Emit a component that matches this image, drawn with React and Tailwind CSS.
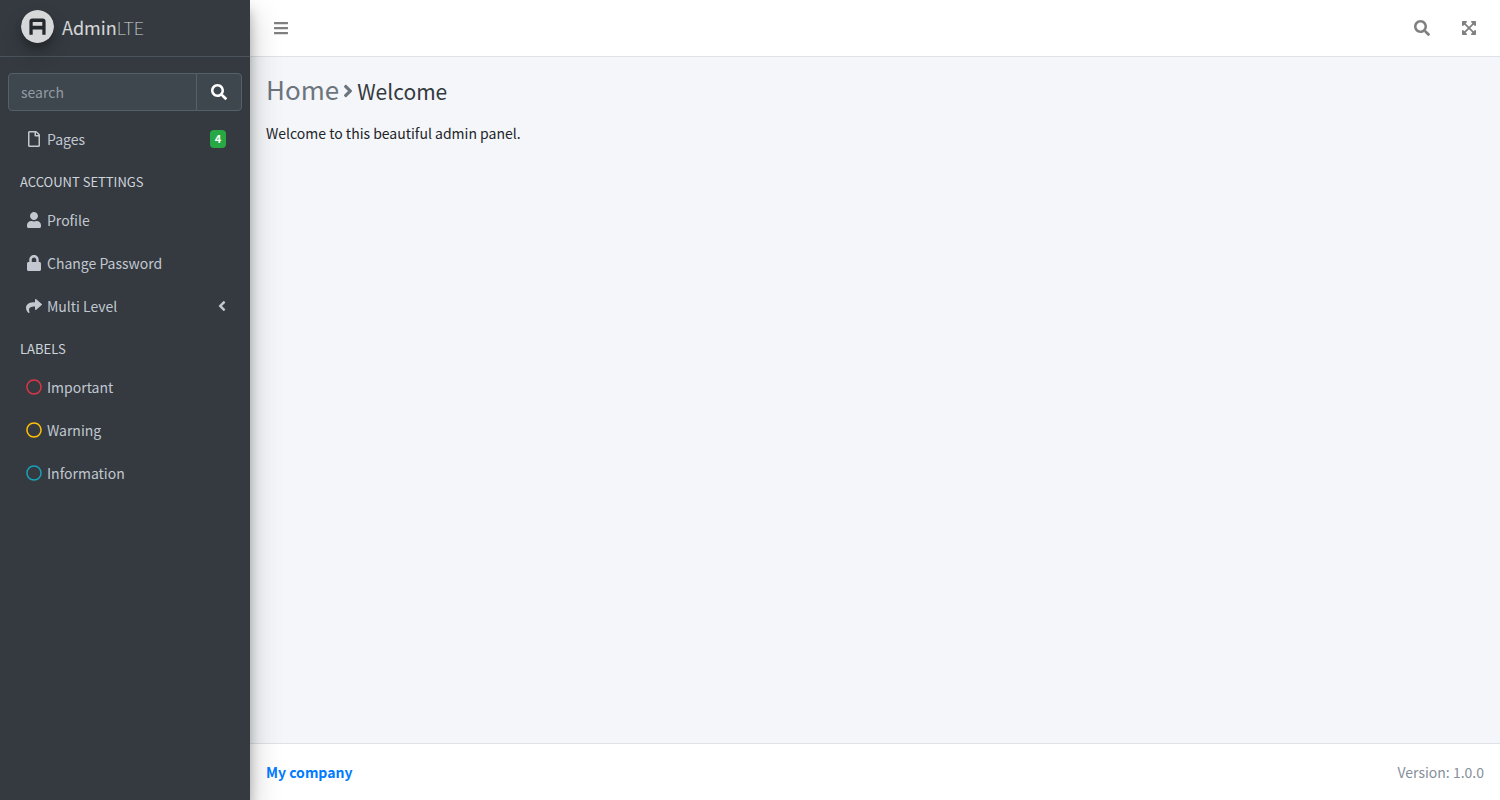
import { FaSearch, FaRegFile, FaUser, FaLock, FaShare, FaAngleLeft, FaAngleRight, FaRegCircle, FaBars, FaExpandArrowsAlt } from "react-icons/fa";

function Logo() {
  return (
    <svg viewBox="0 0 33 33" className="size-[33px] shrink-0 rounded-full opacity-80 shadow-[0_10px_20px_rgba(0,0,0,0.19),0_6px_6px_rgba(0,0,0,0.23)]" aria-hidden="true">
      <circle cx="16.5" cy="16.5" r="16.5" fill="#fff" />
      <path d="M8.4 24.8V11.6a3 3 0 0 1 3-3h10.2a3 3 0 0 1 3 3v13.2h-3.3v-5.2h-9.6v5.2zM11.7 12v3.8h9.6v-3.8z" fill="#212529" fillRule="evenodd" />
    </svg>
  );
}

function NavItem({ icon: Icon, iconClass = "", label, children }) {
  return (
    <li className="mb-[3px]">
      <a href="#" className="flex h-10 items-center rounded px-4 text-[#c2c7d0]">
        <span className="mr-[3px] flex w-5 justify-center">
          <Icon className={`size-4 ${iconClass}`} aria-hidden="true" />
        </span>
        <span className="flex-1">{label}</span>
        {children}
      </a>
    </li>
  );
}

function NavHeader({ children }) {
  return <li className="flex h-[38px] items-center px-3 pt-[2px] text-[13px] text-[#d0d4db]">{children}</li>;
}

function Sidebar() {
  return (
    <aside className="z-10 flex w-[250px] shrink-0 flex-col bg-[#343a40] shadow-[0_14px_28px_rgba(0,0,0,0.25),0_10px_10px_rgba(0,0,0,0.22)]">
      <a href="#" className="flex h-[57px] items-center gap-2 border-b border-[#4b545c] pb-[3px] pl-[21px] text-lg text-white/80">
        <Logo />
        <span>Admin<span className="font-thin">LTE</span></span>
      </a>
      <div className="px-2 pt-4">
        <form className="flex h-[38px] overflow-hidden rounded border border-[#56606a] bg-[#3f474e]" onSubmit={(e) => e.preventDefault()}>
          <input type="search" aria-label="search" placeholder="search" className="min-w-0 flex-1 px-3 text-white outline-none placeholder:text-[#939ba2]" />
          <button type="submit" aria-label="Submit search" className="flex w-[45px] items-center justify-center border-l border-[#56606a] text-white">
            <FaSearch className="size-4" />
          </button>
        </form>
        <nav className="mt-2">
          <ul>
            <NavItem icon={FaRegFile} label="Pages">
              <span className="flex h-[18px] w-4 items-center justify-center rounded bg-[#28a745] text-[11px] font-bold text-white">4</span>
            </NavItem>
            <NavHeader>ACCOUNT SETTINGS</NavHeader>
            <NavItem icon={FaUser} label="Profile" />
            <NavItem icon={FaLock} label="Change Password" />
            <NavItem icon={FaShare} label="Multi Level">
              <FaAngleLeft className="h-4 w-2" aria-hidden="true" />
            </NavItem>
            <NavHeader>LABELS</NavHeader>
            <NavItem icon={FaRegCircle} iconClass="text-[#dc3545]" label="Important" />
            <NavItem icon={FaRegCircle} iconClass="text-[#ffc107]" label="Warning" />
            <NavItem icon={FaRegCircle} iconClass="text-[#17a2b8]" label="Information" />
          </ul>
        </nav>
      </div>
    </aside>
  );
}

export default function App() {
  return (
    <div className="flex min-h-screen bg-[#f4f6f9] font-['Noto_Sans_CJK_SC',sans-serif] text-sm text-[#212529]">
      <Sidebar />
      <div className="flex min-w-0 flex-1 flex-col">
        <header className="flex h-[57px] items-center justify-between border-b border-[#dee2e6] bg-white px-[23px] text-[#808080]">
          <button type="button" aria-label="Toggle menu"><FaBars className="size-4" /></button>
          <div className="flex gap-[31px]">
            <button type="button" aria-label="Search"><FaSearch className="size-4" /></button>
            <button type="button" aria-label="Fullscreen"><FaExpandArrowsAlt className="size-4" /></button>
          </div>
        </header>
        <main className="flex-1 px-4 pt-4">
          <h1 className="flex h-9 items-baseline text-[26px] leading-8 text-[#6c757d]">
            <a href="#">Home</a>
            <FaAngleRight className="mx-1 h-5 w-[10px] self-center" aria-hidden="true" />
            <small className="text-[21px] text-[#343a40]">Welcome</small>
          </h1>
          <p className="mt-[14px]">Welcome to this beautiful admin panel.</p>
        </main>
        <footer className="flex h-[57px] items-center justify-between border-t border-[#dee2e6] bg-white px-4 text-[#869099]">
          <a href="#" className="font-bold text-[#007bff]">My company</a>
          <span>Version: 1.0.0</span>
        </footer>
      </div>
    </div>
  );
}
